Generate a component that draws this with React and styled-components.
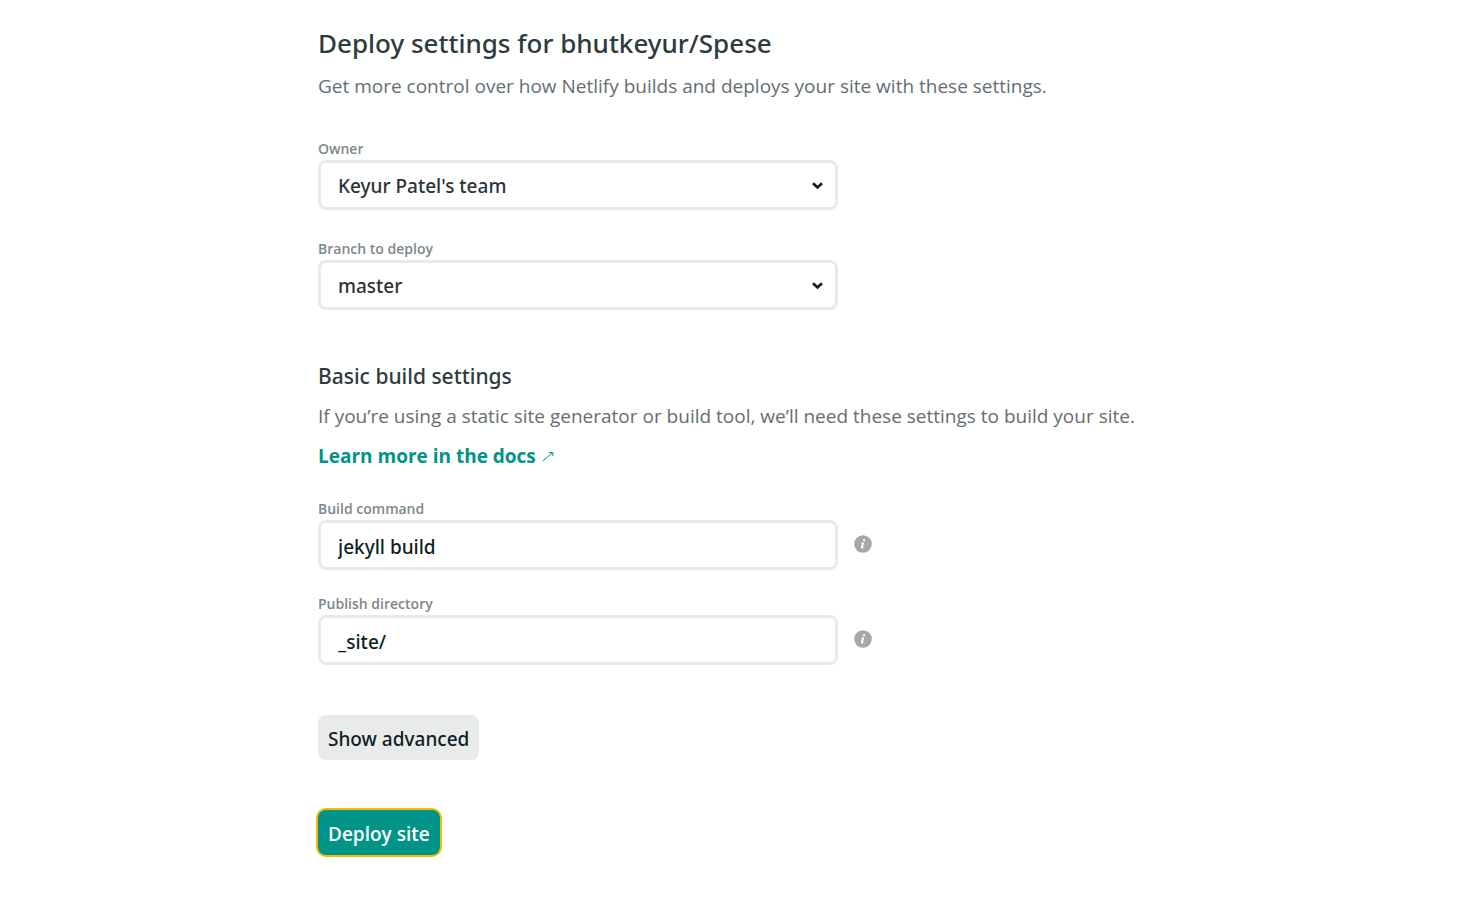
import React from "react";
import styled, { createGlobalStyle } from "styled-components";

const GlobalStyle = createGlobalStyle`
  *, *::before, *::after { box-sizing: border-box; }
  body {
    margin: 0;
    background: #fff;
    color: #0e1e25;
    font-family: "Open Sans", "Noto Sans", sans-serif;
    font-size: 19px;
    line-height: 40px;
  }
`;

const mediumFont = `"Noto Sans", "Open Sans", sans-serif`;

const Page = styled.main`
  max-width: 885px;
  margin: 0 auto;
  padding: 27px 20px 58px;
`;

const Title = styled.h1`
  margin: 0 0 7px;
  font-family: ${mediumFont};
  font-size: 26px;
  font-weight: 500;
  line-height: 32px;
  color: #2d3b41;
`;

const Subtitle = styled.h2`
  margin: 50px 0 4px;
  font-family: ${mediumFont};
  font-size: 21px;
  font-weight: 500;
  line-height: 32px;
  color: #2d3b41;
`;

const Text = styled.p`
  margin: 0;
  color: #646e73;
`;

const DocsLink = styled.a`
  display: inline-flex;
  align-items: center;
  gap: 6px;
  color: #009488;
  font-weight: 700;
  text-decoration: none;
`;

const Fields = styled.div`
  display: flex;
  flex-direction: column;
  gap: ${(p) => p.$gap};
  margin-top: ${(p) => p.$top};
`;

const Label = styled.label`
  display: block;
  padding-top: 1px;
  font-size: 14px;
  font-weight: 600;
  line-height: 23px;
  color: #7d878c;
`;

const Row = styled.div`
  display: flex;
  align-items: center;
  gap: 16px;
`;

const Control = styled.div`
  display: grid;
  align-items: center;
  flex: 0 1 520px;
  > * { grid-area: 1 / 1; }
  > svg {
    justify-self: end;
    margin-right: 14px;
    pointer-events: none;
  }
`;

const Input = styled.input`
  width: 100%;
  height: 50px;
  padding: 3px 17px 0;
  border: 3px solid #e9ebeb;
  border-radius: 8px;
  background: #fff;
  color: #0e1e25;
  font: 500 19px ${mediumFont};
`;

const Select = styled(Input)`
  appearance: none;
  padding-top: 2px;
  color: #2b3337;
`;

const InfoButton = styled.button`
  display: flex;
  padding: 0 0 2px;
  border: 0;
  background: none;
`;

const Button = styled.button`
  display: block;
  height: 45px;
  margin-top: 50px;
  padding: 2px 10px 0;
  border: 0;
  border-radius: 8px;
  font: ${(p) => (p.$primary ? "inherit" : `500 19px ${mediumFont}`)};
  font-weight: ${(p) => (p.$primary ? 600 : 500)};
  color: ${(p) => (p.$primary ? "#fff" : "#0e1e25")};
  background: ${(p) => (p.$primary ? "#009488" : "#e9ebeb")};
  box-shadow: ${(p) => (p.$primary ? "0 0 0 2px #f6bc00" : "none")};
`;

const Chevron = () => (
  <svg width="13" height="9" viewBox="0 0 13 9" fill="none" aria-hidden="true">
    <path d="M2 2.2 6.5 6.5 11 2.2" stroke="#0e1e25" strokeWidth="2.7" />
  </svg>
);

const Arrow = () => (
  <svg width="12" height="11" viewBox="0 0 12 11" fill="none" aria-hidden="true">
    <path d="M.8 10 10.8 1.5M6.8 1.5h4v3.7" stroke="#009488" strokeWidth="1" />
  </svg>
);

const Info = () => (
  <svg width="18" height="18" viewBox="0 0 18 18" aria-hidden="true">
    <circle cx="9" cy="9" r="8.8" fill="#a3a9ac" />
    <circle cx="10.1" cy="5.2" r="1.1" fill="#fff" />
    <path
      d="M7 7.6h3.2L9 12.1c-.1.5.3.5 1.2-.2l.3.4c-1 1.1-1.8 1.4-2.6 1.3-.9-.1-1.1-.7-.9-1.5l.9-3.4c.1-.5-.2-.6-.9-.5z"
      fill="#fff"
    />
  </svg>
);

const SelectField = ({ id, label, option }) => (
  <div>
    <Label htmlFor={id}>{label}</Label>
    <Row>
      <Control>
        <Select as="select" id={id}>
          <option>{option}</option>
        </Select>
        <Chevron />
      </Control>
    </Row>
  </div>
);

const TextField = ({ id, label, value }) => (
  <div>
    <Label htmlFor={id}>{label}</Label>
    <Row>
      <Control>
        <Input id={id} type="text" defaultValue={value} />
      </Control>
      <InfoButton type="button" aria-label={`About ${label}`}>
        <Info />
      </InfoButton>
    </Row>
  </div>
);

export default function App() {
  return (
    <>
      <GlobalStyle />
      <Page>
        <Title>Deploy settings for bhutkeyur/Spese</Title>
        <Text>Get more control over how Netlify builds and deploys your site with these settings.</Text>
        <Fields $top="30px" $gap="26px">
          <SelectField id="owner" label="Owner" option="Keyur Patel's team" />
          <SelectField id="branch" label="Branch to deploy" option="master" />
        </Fields>
        <Subtitle>Basic build settings</Subtitle>
        <Text>If you’re using a static site generator or build tool, we’ll need these settings to build your site.</Text>
        <DocsLink href="#docs">
          Learn more in the docs
          <Arrow />
        </DocsLink>
        <Fields $top="20px" $gap="21px">
          <TextField id="command" label="Build command" value="jekyll build" />
          <TextField id="directory" label="Publish directory" value="_site/" />
        </Fields>
        <Button type="button">Show advanced</Button>
        <Button type="submit" $primary>Deploy site</Button>
      </Page>
    </>
  );
}
